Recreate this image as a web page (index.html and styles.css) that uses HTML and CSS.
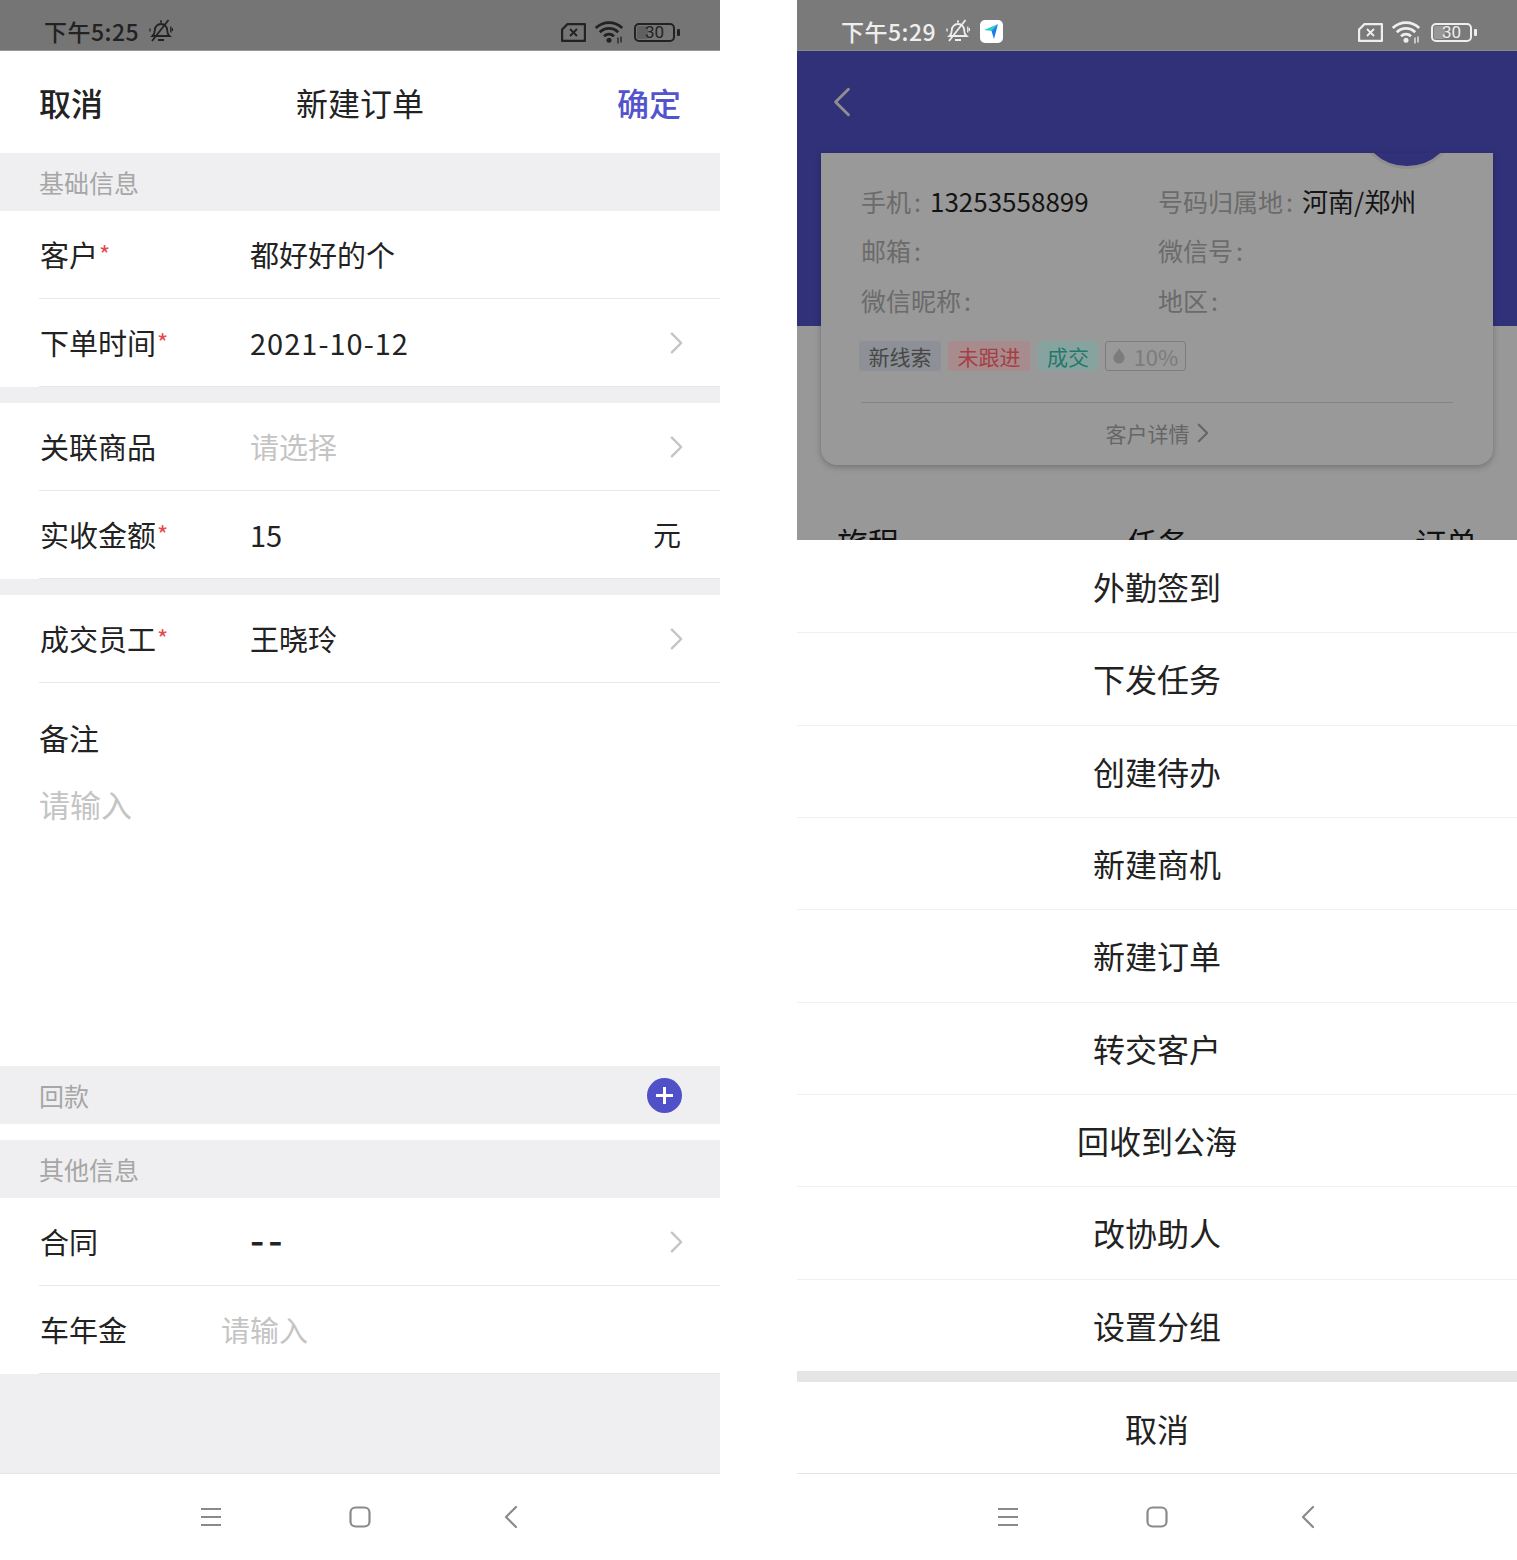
FILE: index.html
```html
<!DOCTYPE html>
<html lang="zh-CN">

<head>
  <title>新建订单</title>
  <meta charset="UTF-8" />
  <meta name="viewport" content="width=device-width, initial-scale=1" />
  <link rel="stylesheet" href="styles.css">
</head>

<body>
  <svg class="sprites" width="0" height="0">
    <symbol id="i-bell" viewBox="0 0 24 24">
      <path d="M3.500 17c1.800-1.500 2.300-3.200 2.300-5.800C5.800 7.800 8.300 5 12 5s6.200 2.800 6.200 6.200c0 2.600.5 4.300 2.300 5.800H3.500zM9 21h6M11 2.500h2" fill="none" stroke="currentColor" stroke-width="1.800" />
      <path d="M3 22 19.500 1" fill="none" stroke="currentColor" stroke-width="1.800" />
      <path d="M21.800 7.500v6M23.500 9v3M1 9.500v3" fill="none" stroke="currentColor" stroke-width="1.300" />
    </symbol>
    <symbol id="i-sim" viewBox="0 0 25 19">
      <path d="M6.500 1.100H23.900v16.800H1.100V6.500z" fill="none" stroke="currentColor" stroke-width="2.200" stroke-linejoin="round" />
      <path d="m9 6 7 7M16 6l-7 7" fill="none" stroke="currentColor" stroke-width="1.800" />
    </symbol>
    <symbol id="i-wifi" viewBox="0 0 29 24">
      <path d="M.8 8C8.300.8 19.700.8 27.200 8M4.800 12.200c5.300-5 13.100-5 18.400 0M9 16.200c3-2.700 7-2.700 10 0" fill="none" stroke="currentColor" stroke-width="2.800" />
      <circle cx="14" cy="20.300" r="2.500" fill="currentColor" />
      <path d="M23 17.500v6M26 16.500v6" fill="none" stroke="currentColor" stroke-width="1.300" />
    </symbol>
    <symbol id="i-right" viewBox="0 0 14 24">
      <path d="m2 2 10 10L2 22" fill="none" stroke="currentColor" stroke-width="2.600" stroke-linecap="round" stroke-linejoin="round" />
    </symbol>
    <symbol id="i-left" viewBox="0 0 14 24">
      <path d="M12 2 2 12l10 10" fill="none" stroke="currentColor" stroke-width="2.200" stroke-linecap="round" stroke-linejoin="round" />
    </symbol>
    <symbol id="i-menu" viewBox="0 0 22 20">
      <path d="M1 2h20M1 10h20M1 18h20" fill="none" stroke="currentColor" stroke-width="2" />
    </symbol>
    <symbol id="i-home" viewBox="0 0 22 22">
      <rect x="1.500" y="1.500" width="19" height="19" rx="5" fill="none" stroke="currentColor" stroke-width="2.200" />
    </symbol>
  </svg>

  <!-- left phone: order form -->
  <section class="screen">
    <div class="status status-dark">
      <span class="status-time">下午5:25</span>
      <svg class="icon-bell"><use href="#i-bell" /></svg>
      <span class="status-right">
        <svg class="icon-sim"><use href="#i-sim" /></svg>
        <svg class="icon-wifi"><use href="#i-wifi" /></svg>
        <span class="battery"><span class="battery-level"></span><span class="battery-num">30</span></span>
        <span class="battery-nub"></span>
      </span>
    </div>

    <header class="topbar">
      <span class="topbar-btn">取消</span>
      <span class="topbar-title">新建订单</span>
      <span class="topbar-btn topbar-ok">确定</span>
    </header>

    <div class="section-head">基础信息</div>
    <div class="row">
      <span class="row-label">客户<i class="star">*</i></span>
      <span class="row-value">都好好的个</span>
    </div>
    <div class="row">
      <span class="row-label">下单时间<i class="star">*</i></span>
      <span class="row-value row-value-num">2021-10-12</span>
      <svg class="chevron"><use href="#i-right" /></svg>
    </div>

    <div class="gap"></div>
    <div class="row">
      <span class="row-label">关联商品</span>
      <span class="row-value placeholder">请选择</span>
      <svg class="chevron"><use href="#i-right" /></svg>
    </div>
    <div class="row">
      <span class="row-label">实收金额<i class="star">*</i></span>
      <span class="row-value">15</span>
      <span class="row-unit">元</span>
    </div>

    <div class="gap"></div>
    <div class="row">
      <span class="row-label">成交员工<i class="star">*</i></span>
      <span class="row-value">王晓玲</span>
      <svg class="chevron"><use href="#i-right" /></svg>
    </div>
    <div class="remark">
      <div class="remark-label">备注</div>
      <div class="remark-input">请输入</div>
    </div>

    <div class="section-head section-head-add">
      <span>回款</span>
      <span class="add-btn"></span>
    </div>
    <div class="gap gap-white"></div>
    <div class="section-head">其他信息</div>
    <div class="row">
      <span class="row-label">合同</span>
      <span class="row-value row-value-dash">--</span>
      <svg class="chevron"><use href="#i-right" /></svg>
    </div>
    <div class="row">
      <span class="row-label row-label-short">车年金</span>
      <span class="row-value placeholder">请输入</span>
    </div>
    <div class="filler"></div>

    <nav class="navbar">
      <svg class="nav-menu"><use href="#i-menu" /></svg>
      <svg class="nav-home"><use href="#i-home" /></svg>
      <svg class="nav-back"><use href="#i-left" /></svg>
    </nav>
  </section>

  <!-- right phone: customer page with action sheet -->
  <section class="screen">
    <div class="status status-light">
      <span class="status-time">下午5:29</span>
      <svg class="icon-bell"><use href="#i-bell" /></svg>
      <svg class="app-badge" viewBox="0 0 23 23">
        <rect width="23" height="23" rx="5" fill="#fff" />
        <path d="M4 10 18 4l-6 7z" fill="#2fd0bd" />
        <path d="M18 4 14 19l-2.500-8z" fill="#1b7cf0" />
      </svg>
      <span class="status-right">
        <svg class="icon-sim"><use href="#i-sim" /></svg>
        <svg class="icon-wifi"><use href="#i-wifi" /></svg>
        <span class="battery"><span class="battery-level"></span><span class="battery-num">30</span></span>
        <span class="battery-nub"></span>
      </span>
    </div>

    <div class="detail">
      <div class="detail-top">
        <svg class="detail-back"><use href="#i-left" /></svg>
      </div>
      <div class="card">
        <span class="avatar"></span>
        <div class="info">
          <div>手机<i class="colon">:</i><b>13253558899</b></div>
          <div>号码归属地<i class="colon">:</i><b>河南/郑州</b></div>
          <div>邮箱<i class="colon">:</i></div>
          <div>微信号<i class="colon">:</i></div>
          <div>微信昵称<i class="colon">:</i></div>
          <div>地区<i class="colon">:</i></div>
        </div>
        <div class="tags">
          <span class="tag tag-grey">新线索</span>
          <span class="tag tag-red">未跟进</span>
          <span class="tag tag-green">成交</span>
          <span class="tag tag-heat">
            <svg class="flame" viewBox="0 0 12 16"><path d="M6 0c1 3 5.500 5.500 5.500 10A5.500 5.500 0 0 1 .5 10C.5 6 5 4 6 0z" fill="currentColor" /></svg>
            10%
          </span>
        </div>
        <div class="card-foot">
          <span>客户详情</span>
          <svg class="card-foot-arrow"><use href="#i-right" /></svg>
        </div>
      </div>
      <div class="tabs">
        <span>旅程</span>
        <span>任务</span>
        <span>订单</span>
      </div>
    </div>

    <div class="sheet">
      <div class="sheet-item">外勤签到</div>
      <div class="sheet-item">下发任务</div>
      <div class="sheet-item">创建待办</div>
      <div class="sheet-item">新建商机</div>
      <div class="sheet-item">新建订单</div>
      <div class="sheet-item">转交客户</div>
      <div class="sheet-item">回收到公海</div>
      <div class="sheet-item">改协助人</div>
      <div class="sheet-item">设置分组</div>
    </div>
    <div class="sheet-cancel">取消</div>

    <nav class="navbar">
      <svg class="nav-menu"><use href="#i-menu" /></svg>
      <svg class="nav-home"><use href="#i-home" /></svg>
      <svg class="nav-back"><use href="#i-left" /></svg>
    </nav>
  </section>
</body>

</html>
```

FILE: styles.css
```css
* {
  box-sizing: border-box;
}

body {
  margin: 0;
  width: 1517px;
  height: 1560px;
  display: flex;
  justify-content: space-between;
  overflow: hidden;
  background-color: #fff;
  color: #222;
  font-family: "Noto Sans CJK SC", "Noto Sans", sans-serif;
}

.sprites {
  display: block;
  position: absolute;
}

.screen {
  width: 720px;
  height: 1560px;
  display: flex;
  flex-direction: column;
}

/* status bar */
.status {
  height: 51px;
  flex: none;
  display: flex;
  align-items: center;
  padding: 12px 40px 0 44px;
  border-bottom: 1px solid #9a9a9a;
}

.status-dark {
  background-color: #757575;
  color: #222;
}

.status-light {
  background-color: #7a7a7a;
  color: #eee;
  border-bottom-color: #8a8a8a;
}

.status-time {
  font-size: 23px;
  font-weight: 500;
  letter-spacing: 0.5px;
  line-height: 30px;
}

.icon-bell {
  width: 24px;
  height: 24px;
  margin-left: 10px;
}

.app-badge {
  width: 23px;
  height: 23px;
  margin-left: 10px;
}

.status-right {
  margin-left: auto;
  margin-top: 2px;
  display: flex;
  align-items: center;
}

.icon-sim {
  width: 25px;
  height: 19px;
}

.icon-wifi {
  width: 29px;
  height: 24px;
  margin-left: 9px;
}

.battery {
  position: relative;
  width: 41px;
  height: 19px;
  margin-left: 10px;
  border: 2px solid currentColor;
  border-radius: 5px;
  display: flex;
  align-items: center;
  justify-content: center;
}

.battery-level {
  position: absolute;
  left: 1px;
  top: 1px;
  bottom: 1px;
  width: 11px;
  background-color: currentColor;
  opacity: 0.25;
  border-radius: 2px;
}

.battery-num {
  font-size: 17px;
  line-height: 15px;
  font-family: Roboto, sans-serif;
}

.battery-nub {
  width: 3px;
  height: 7px;
  margin-left: 2px;
  background-color: currentColor;
  border-radius: 1px;
}

/* top bar */
.topbar {
  height: 102px;
  flex: none;
  display: flex;
  align-items: center;
  justify-content: space-between;
  padding: 0 39px 1px 39px;
}

.topbar-btn {
  font-size: 32px;
  font-weight: 500;
}

.topbar-title {
  font-size: 32px;
}

.topbar-ok {
  color: #5353cd;
}

/* form */
.section-head {
  height: 58px;
  flex: none;
  display: flex;
  align-items: center;
  padding: 0 38px 0 39px;
  background-color: #efeff1;
  color: #a6a6a6;
  font-size: 25px;
}

.section-head-add {
  justify-content: space-between;
}

.add-btn {
  position: relative;
  width: 35px;
  height: 35px;
  margin-top: 1px;
  border-radius: 50%;
  background-color: #5050c8;
}

.add-btn::before,
.add-btn::after {
  content: "";
  position: absolute;
  background-color: #fff;
  left: 9px;
  top: 16px;
  width: 17px;
  height: 3px;
}

.add-btn::after {
  left: 16px;
  top: 9px;
  width: 3px;
  height: 17px;
}

.gap {
  height: 16px;
  flex: none;
  background-color: #efeff1;
}

.gap-white {
  background-color: #fff;
}

.row {
  height: 88px;
  flex: none;
  margin-left: 39px;
  padding: 0 37px 2px 1px;
  display: flex;
  align-items: center;
  border-bottom: 1px solid #e8e8e8;
  font-size: 29px;
}

.row-label {
  width: 210px;
  flex: none;
}

.row-label-short {
  width: 181px;
}

.row-value {
  flex: 1;
}

.row-value-num {
  letter-spacing: 1px;
}

.row-value-dash {
  font-size: 40px;
  font-weight: 500;
  letter-spacing: 4px;
  line-height: 40px;
  margin-bottom: 6px;
}

.star {
  color: #e5484d;
  font-style: normal;
  font-size: 24px;
  margin-left: 1px;
  vertical-align: 3px;
}

.placeholder {
  color: #c4c4c4;
}

.chevron {
  width: 13px;
  height: 24px;
  margin-top: 2px;
  color: #c4c4c4;
}

.row-unit {
  margin-right: 2px;
  font-size: 28px;
}

.remark {
  height: 383px;
  flex: none;
  padding: 28px 39px 0;
}

.remark-label {
  font-size: 30px;
  line-height: 52px;
}

.remark-input {
  margin-top: 15px;
  color: #c4c4c4;
  font-size: 31px;
  line-height: 52px;
}

.filler {
  flex: 1;
  background-color: #efeff1;
}

/* android nav bar */
.navbar {
  height: 87px;
  flex: none;
  display: grid;
  grid-template-columns: repeat(3, 150px);
  justify-content: center;
  justify-items: center;
  align-items: center;
  padding-bottom: 1px;
  border-top: 1px solid #e5e5e5;
  color: #8a8a8a;
}

.nav-menu,
.nav-home {
  width: 22px;
  height: 22px;
}

.nav-menu {
  margin-left: 1px;
}

.nav-back {
  width: 14px;
  height: 24px;
  margin-left: 2px;
}

/* customer detail behind the sheet */
.detail {
  height: 489px;
  flex: none;
  overflow: hidden;
  background: linear-gradient(#31317a 275px, #989898 275px);
}

.detail-top {
  height: 102px;
  display: flex;
  align-items: center;
  padding-left: 36px;
}

.detail-back {
  width: 18px;
  height: 32px;
  color: #8f8f8f;
}

.card {
  position: relative;
  height: 312px;
  margin: 0 24px;
  padding: 22px 40px 0;
  overflow: hidden;
  background-color: #999;
  border-radius: 0 0 16px 16px;
  box-shadow: 0 2px 6px rgba(0, 0, 0, 0.25);
}

.avatar {
  position: absolute;
  top: -88px;
  right: 34px;
  width: 104px;
  height: 104px;
  border-radius: 50%;
  border: 3px solid #8f8f8f;
  background-color: #31317a;
}

.info {
  display: grid;
  grid-template-columns: 297px 1fr;
  grid-auto-rows: 50px;
  align-items: center;
  color: #6b6b6b;
  font-size: 25px;
}

.info b {
  color: #141414;
  font-size: 26px;
  font-weight: 400;
}

.colon {
  font-style: normal;
  margin: 0 9px 0 3px;
}

.tags {
  display: flex;
  gap: 7px;
  margin: 16px 0 0 -2px;
}

.tag {
  height: 30px;
  display: flex;
  align-items: center;
  justify-content: center;
  gap: 9px;
  width: 82px;
  border-radius: 3px;
  font-size: 21px;
}

.tag-grey {
  background-color: #8d9096;
  color: #474747;
}

.tag-red {
  background-color: #a78b8d;
  color: #a63e46;
}

.tag-green {
  width: 60px;
  margin-left: 1px;
  background-color: #87a3a0;
  color: #25776a;
}

.tag-heat {
  width: 81px;
  border: 1px solid #7d7d7d;
  color: #7c7c7c;
  font-size: 22px;
}

.flame {
  width: 12px;
  height: 16px;
}

.card-foot {
  margin-top: 31px;
  border-top: 1px solid #858585;
  height: 62px;
  padding-bottom: 2px;
  display: flex;
  align-items: center;
  justify-content: center;
  gap: 7px;
  color: #666;
  font-size: 21px;
}

.card-foot-arrow {
  width: 12px;
  height: 20px;
}

.tabs {
  display: flex;
  justify-content: space-between;
  padding: 54px 40px 0;
  color: #111;
  font-size: 31px;
  line-height: 46px;
}

/* action sheet */
.sheet {
  height: 831px;
  flex: none;
  display: flex;
  flex-direction: column;
  padding-top: 1px;
  background-color: #fff;
}

.sheet-item {
  flex: 1;
  display: flex;
  align-items: center;
  justify-content: center;
  padding-bottom: 1px;
  border-bottom: 1px solid #f0f0f0;
  font-size: 32px;
}

.sheet-item:last-child {
  border-bottom: 0;
}

.sheet-cancel {
  height: 102px;
  flex: none;
  display: flex;
  align-items: center;
  justify-content: center;
  border-top: 11px solid #e5e5e5;
  font-size: 32px;
}
```
